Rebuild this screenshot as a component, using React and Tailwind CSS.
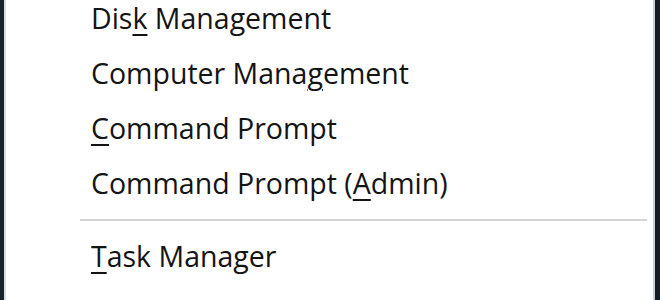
import React from 'react';

const items = [
  { before: 'Dis', key: 'k', after: ' Management' },
  { before: 'Computer Mana', key: 'g', after: 'ement' },
  { before: '', key: 'C', after: 'ommand Prompt' },
  { before: 'Command Prompt (', key: 'A', after: 'dmin)' },
];

function Item({ before, hot, after }) {
  return (
    <div className="h-[55px] flex items-center pl-[85px] text-[28.5px] text-[#141414] leading-none">
      <span>
        {before}
        <u className="decoration-2 underline-offset-[5px]">{hot}</u>
        {after}
      </span>
    </div>
  );
}

export default function App() {
  return (
    <div
      className="w-[660px] h-[300px] flex bg-white overflow-hidden"
      style={{ fontFamily: '"Open Sans", "Noto Sans", sans-serif' }}
    >
      <div className="w-[4px] bg-[#17232a]" />
      <div className="w-[2px] bg-[#d7dde2]" />
      <div className="flex-1 flex flex-col -mt-[9px]">
        {items.map((it, i) => (
          <Item key={i} before={it.before} hot={it.key} after={it.after} />
        ))}
        <div className="ml-[74px] mr-[6px] h-[2px] bg-[#d4d4d4] my-[8px]" />
        <Item before="" hot="T" after="ask Manager" />
      </div>
      <div className="w-[2px] bg-[#c9ced2]" />
      <div className="w-[5px] bg-[#121c22]" />
    </div>
  );
}
